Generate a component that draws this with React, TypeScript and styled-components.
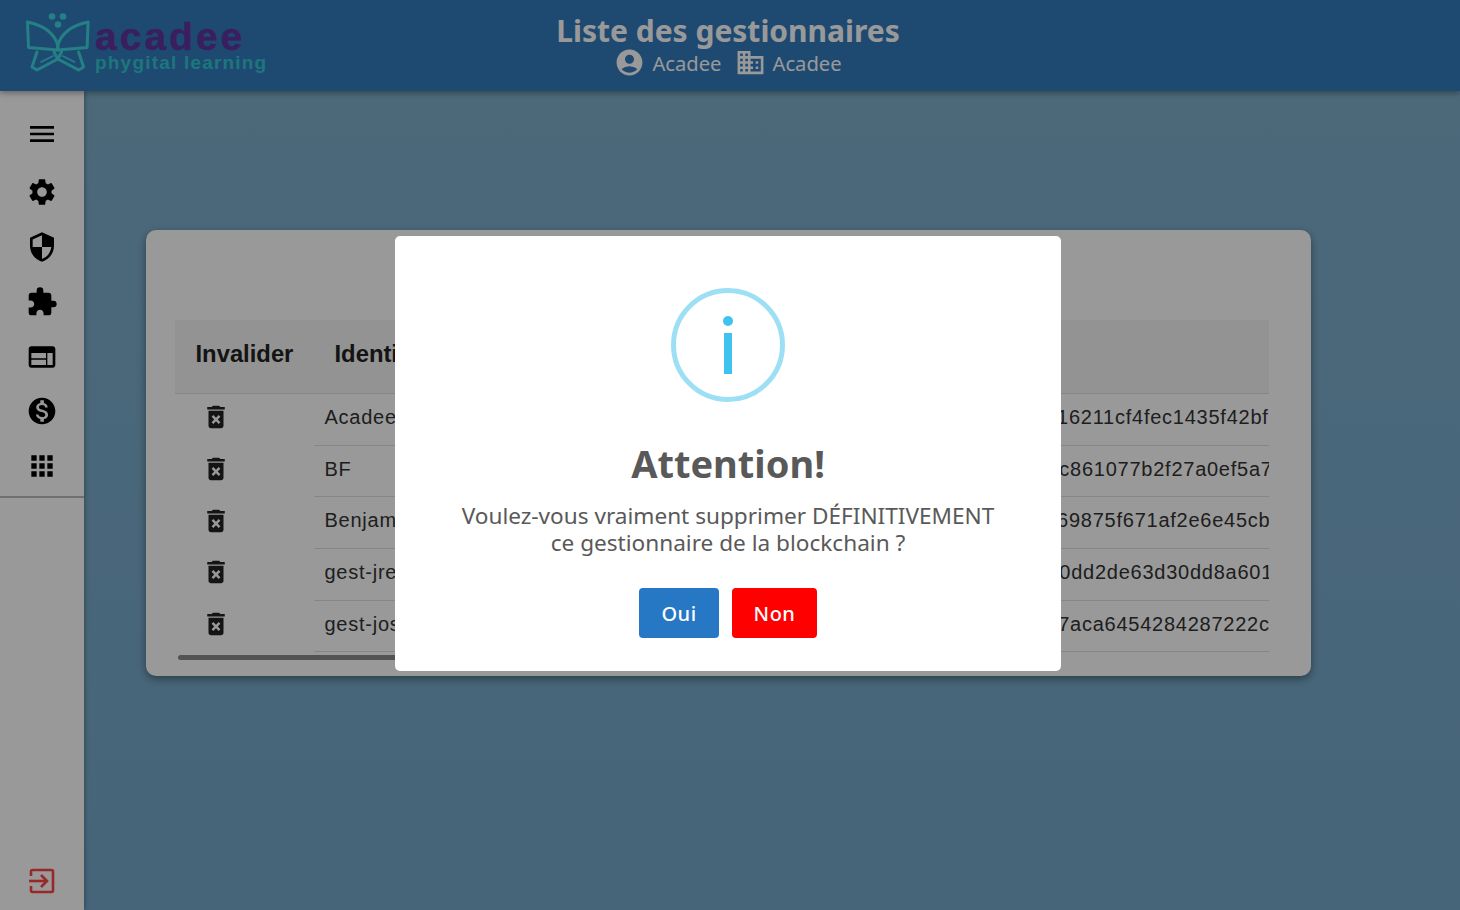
import React from 'react';
import styled, { createGlobalStyle } from 'styled-components';
import { MdMenu, MdSettings, MdSecurity, MdExtension, MdWeb, MdMonetizationOn, MdApps, MdDeleteForever, MdAccountCircle, MdDomain } from 'react-icons/md';

const Global = createGlobalStyle`
  html, body { margin: 0; padding: 0; background: #fff; }
  * { box-sizing: border-box; }
`;
const UI = '"Noto Sans", "Open Sans", sans-serif';
const TABLE = '"Liberation Sans", Arial, sans-serif';

const Page = styled.div`
  position: relative; width: 100vw; height: 100vh; overflow: hidden;
  display: flex; flex-direction: column; font-family: ${UI};
  background: #76a8ca;
`;
const Header = styled.header`
  height: 91px; flex: none; background: #337bbd; display: flex; align-items: center;
  position: relative; z-index: 2; box-shadow: 0 2px 6px rgba(0,0,0,.35);
`;
const Logo = styled.div`width: 270px; margin-left: 26px; display: flex; align-items: flex-start; gap: 3px; height: 62px; margin-top: -10px;`;
const LogoWords = styled.div`display: flex; flex-direction: column; padding-top: 9px; font-family: "Liberation Sans", sans-serif; font-weight: 700;`;
const LogoName = styled.div`font-size: 39px; line-height: 35px; letter-spacing: 3px; color: #60359f; -webkit-text-stroke: .5px #60359f;`;
const LogoTag = styled.div`font-size: 19px; line-height: 18px; letter-spacing: 1.2px; color: #2fc6cf;`;
const HeaderCenter = styled.div`
  position: absolute; left: 0; right: 4px; top: 12px; display: flex; flex-direction: column; align-items: center; color: #fff;
`;
const PageTitle = styled.div`font-size: 30px; line-height: 38px; font-weight: 700;`;
const Crumbs = styled.div`display: flex; align-items: center; font-size: 20.2px; line-height: 28px; margin-top: -3px;`;
const Crumb = styled.span`display: inline-flex; align-items: center; gap: 7px; margin-right: 13px; &:last-child { margin-right: 0; } svg { width: 31px; height: 31px; }`;
const Body = styled.div`flex: 1; display: flex; min-height: 0;`;
const Sidebar = styled.nav`
  width: 84px; flex: none; background: #fff; display: flex; flex-direction: column; align-items: stretch;
  padding-top: 16px; box-shadow: 1px 0 4px rgba(0,0,0,.3); position: relative; z-index: 1;
`;
const NavIcon = styled.div<{ $first?: boolean }>`
  height: 54.8px; display: flex; align-items: center; justify-content: center; color: #000;
  margin-bottom: ${p => (p.$first ? '3px' : '0')};
  svg { width: 32px; height: 32px; }
`;
const Divider = styled.div`height: 2px; background: #bbb; margin-top: 2px;`;
const Logout = styled.div`margin-top: auto; height: 58px; display: flex; align-items: center; justify-content: center; color: #ff4444;`;
const Main = styled.main`
  flex: 1; min-width: 0; padding: 139px 149px 0 62px;
  background: linear-gradient(#7fafcc, #76a8ca);
`;
const Card = styled.section`
  height: 446px; background: #fff; border-radius: 10px; padding: 90px 42px 0 29px;
  box-shadow: 0 3px 8px rgba(0,0,0,.4);
`;
const TableWrap = styled.div`overflow: hidden; font-family: ${TABLE}; color: #333;`;
const HeadRow = styled.div`display: flex; height: 74px; align-items: center; padding-bottom: 5px; background: #f5f5f5; border-bottom: 1px solid #e0e0e0;`;
const HeadCell = styled.div<{ $w: number }>`width: ${p => p.$w}px; flex: none; padding-left: 20.5px; font-size: 23.8px; font-weight: 700; color: #222;`;
const Row = styled.div`display: flex; height: 51.7px; white-space: nowrap;`;
const TrashCell = styled.div`width: 139px; flex: none; display: flex; align-items: center; padding: 0 0 5px 26px; color: #222; svg { width: 30px; height: 30px; }`;
const TextCell = styled.div<{ $w?: number }>`
  ${p => (p.$w ? `width: ${p.$w}px; flex: none;` : 'flex: 1; min-width: 0;')}
  display: flex; align-items: center; padding-bottom: 4px; font-size: 20px; letter-spacing: .75px; border-bottom: 1px solid #e0e0e0;
  overflow: hidden;
`;
const NameCell = styled(TextCell)`padding-left: 10.5px;`;
const Scrollbar = styled.div`width: 400px; height: 5px; border-radius: 3px; background: #8a8a8a; margin: 2.500px 0 0 3px;`;

const Overlay = styled.div`
  position: absolute; inset: 0; z-index: 10; background: rgba(0,0,0,.4); padding: 0 4px 3px 0;
  display: flex; align-items: center; justify-content: center;
`;
const Dialog = styled.div`
  width: 666px; height: 435px; background: #fff; border-radius: 5px; padding-top: 52px;
  display: flex; flex-direction: column; align-items: center; color: #595959;
`;
const InfoIcon = styled.div`
  width: 114px; height: 114px; border-radius: 50%; border: 5px solid #9de0f6; flex: none;
  display: flex; flex-direction: column; align-items: center; padding-top: 23px; gap: 7px;
`;
const InfoDot = styled.div`width: 10px; height: 10px; border-radius: 50%; background: #3fc3ee;`;
const InfoStem = styled.div`width: 8px; height: 41px; background: #3fc3ee;`;
const DialogTitle = styled.h2`margin: 37px 0 0; font-size: 38px; line-height: 48px; font-weight: 700;`;
const DialogText = styled.p`margin: 15px 0 0; font-size: 22.6px; line-height: 27px; text-align: center; font-weight: 400;`;
const Buttons = styled.div`display: flex; gap: 13px; margin-top: 32px;`;
const Btn = styled.button<{ $bg: string; $w: number }>`
  height: 50px; width: ${p => p.$w}px; border: 0; border-radius: 4px; background: ${p => p.$bg}; color: #fff;
  font: 500 20px ${UI}; letter-spacing: .5px;
`;

const Wing = () => (
  <>
    <path d="M27.500 24C40 26.500 53 32 57.800 47V52L28.500 49.500Z" />
    <path d="M37 54L32 69L37 72L57.800 61L54 54" />
    <path d="M41 64L53 58" strokeWidth="1.6" />
  </>
);
const LogoMark = () => (
  <svg width="66" height="62" viewBox="26 12 66 62" fill="none" stroke="#3cd6dd" strokeWidth="3" strokeLinejoin="round" strokeLinecap="round">
    <g fill="#3cd6dd" stroke="none">
      <circle cx="52" cy="18.500" r="3.300" /><circle cx="63" cy="18.500" r="3.300" /><circle cx="58" cy="26.500" r="3.200" />
    </g>
    <Wing />
    <g transform="translate(115.600 0) scale(-1 1)"><Wing /></g>
  </svg>
);
const ExitIcon = () => (
  <svg width="26" height="26" viewBox="0 0 26 26" fill="none" stroke="currentColor" strokeWidth="2.6">
    <path d="M2 8V3.500Q2 2 3.500 2H22.500Q24 2 24 3.500V22.500Q24 24 22.500 24H3.500Q2 24 2 22.500V18" />
    <path d="M0 13H16" /><path d="M12 7L18 13L12 19" />
  </svg>
);

const rows = [
  { name: 'Acadee', hash: 'c2a90c47d83e5b16c7091' + '6211cf4fec1435f42bf7e0a' },
  { name: 'BF', hash: '3e9a07d18b4526c09d13' + 'c861077b2f27a0ef5a78e41' },
  { name: 'Benjamin', hash: 'c2a90c47d83e5b16c709' + '69875f671af2e6e45cb0d2' },
  { name: 'gest-jrey', hash: 'c2a90447d83e5b16a709' + '0dd2de63d30dd8a6014be9' },
  { name: 'gest-josé', hash: '4e9a07d18b4526c0d9c3' + '7aca6454284287222c90a' },
];

export default function App() {
  return (
    <Page>
      <Global />
      <Header>
        <Logo>
          <LogoMark />
          <LogoWords>
            <LogoName>acadee</LogoName>
            <LogoTag>phygital learning</LogoTag>
          </LogoWords>
        </Logo>
        <HeaderCenter>
          <PageTitle>Liste des gestionnaires</PageTitle>
          <Crumbs>
            <Crumb><MdAccountCircle />Acadee</Crumb>
            <Crumb><MdDomain />Acadee</Crumb>
          </Crumbs>
        </HeaderCenter>
      </Header>
      <Body>
        <Sidebar>
          <NavIcon $first><MdMenu /></NavIcon>
          <NavIcon><MdSettings /></NavIcon>
          <NavIcon><MdSecurity /></NavIcon>
          <NavIcon><MdExtension /></NavIcon>
          <NavIcon><MdWeb /></NavIcon>
          <NavIcon><MdMonetizationOn /></NavIcon>
          <NavIcon><MdApps /></NavIcon>
          <Divider />
          <Logout><ExitIcon /></Logout>
        </Sidebar>
        <Main>
          <Card>
            <TableWrap>
              <HeadRow>
                <HeadCell $w={139}>Invalider</HeadCell>
                <HeadCell $w={509}>Identifiant</HeadCell>
                <HeadCell $w={446}>Adresse</HeadCell>
              </HeadRow>
              {rows.map(r => (
                <Row key={r.name}>
                  <TrashCell><MdDeleteForever /></TrashCell>
                  <NameCell $w={509}>{r.name}</NameCell>
                  <TextCell>{r.hash}</TextCell>
                </Row>
              ))}
            </TableWrap>
            <Scrollbar />
          </Card>
        </Main>
      </Body>
      <Overlay>
        <Dialog>
          <InfoIcon><InfoDot /><InfoStem /></InfoIcon>
          <DialogTitle>Attention!</DialogTitle>
          <DialogText>Voulez-vous vraiment supprimer DÉFINITIVEMENT<br />ce gestionnaire de la blockchain ?</DialogText>
          <Buttons>
            <Btn $bg="#2778c4" $w={80}>Oui</Btn>
            <Btn $bg="#ff0000" $w={85}>Non</Btn>
          </Buttons>
        </Dialog>
      </Overlay>
    </Page>
  );
}
